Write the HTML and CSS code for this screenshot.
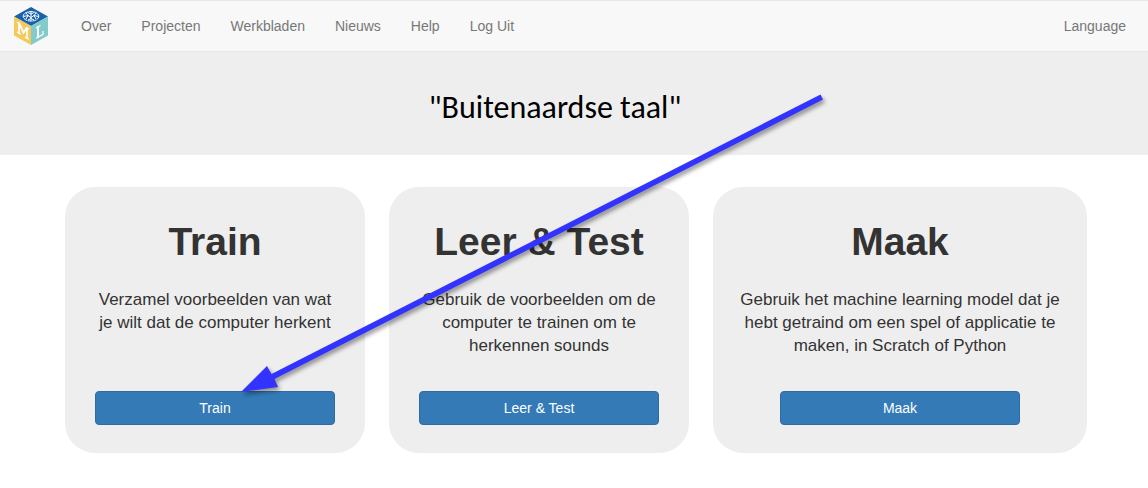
FILE: index.html
```html
<!DOCTYPE html>
<html lang="nl">
<head>
<meta charset="utf-8">
<meta name="viewport" content="width=device-width, initial-scale=1">
<title>Buitenaardse taal</title>
<link rel="stylesheet" href="styles.css">
</head>
<body>
<header class="navbar">
  <a class="brand" href="#" aria-label="Home">
    <svg class="logo" viewBox="0 0 34 38" aria-hidden="true">
      <path fill="#1862ab" d="M17 0 34 9.500 17 19 0 9.500z"/>
      <path fill="#f5c95b" d="M0 9.500 17 19V38L0 28.500z"/>
      <path fill="#82cbca" d="M34 9.500 17 19V38l17-9.500z"/>
      <g fill="none" stroke="#fff" stroke-width="1">
        <ellipse cx="17" cy="9.300" rx="7.800" ry="4.800" stroke-dasharray="4 .6"/>
        <path d="M17 4.500v9.600M12 6l2 2.500-2 3.500M22 6l-2 2.500 2 3.500M9.500 9.500l4.500-1 3 2 3-2 4.500 1M14 5.500l3 1.500 3-1.500M14 13l3-1.500 3 1.500"/>
      </g>
      <g fill="none" stroke="#fff" stroke-linecap="square">
        <path stroke-width="1.600" d="M5 16v10M13 21v10"/>
        <path stroke-width="2" d="M5.500 17l4 8.500 3-4"/>
        <path stroke-width="1.200" d="M3.500 15.500l2 1M3.500 25.200l3 1.700M11.500 30.200l3 1.700M13 20.800l1.500 1"/>
        <path stroke-width="1.900" d="M24 20v10"/>
        <path stroke-width="1.200" d="M22.500 20.700l3.500-2M22.500 31l6.500-3.700V24.500"/>
      </g>
    </svg>
  </a>
  <nav class="menu">
    <a href="#">Over</a>
    <a href="#">Projecten</a>
    <a href="#">Werkbladen</a>
    <a href="#">Nieuws</a>
    <a href="#">Help</a>
    <a href="#">Log Uit</a>
  </nav>
  <a class="language" href="#">Language</a>
</header>
<div class="hero"><h1 class="title">"Buitenaardse taal"</h1></div>
<main class="cards">
  <section class="card">
    <h2>Train</h2>
    <p>Verzamel voorbeelden van wat je wilt dat de computer herkent</p>
    <button type="button">Train</button>
  </section>
  <section class="card">
    <h2>Leer &amp; Test</h2>
    <p>Gebruik de voorbeelden om de computer te trainen om te herkennen sounds</p>
    <button type="button">Leer &amp; Test</button>
  </section>
  <section class="card">
    <h2>Maak</h2>
    <p>Gebruik het machine learning model dat je hebt getraind om een spel of applicatie te maken, in Scratch of Python</p>
    <button type="button">Maak</button>
  </section>
</main>
<svg class="arrow" viewBox="0 0 620 330" aria-hidden="true">
  <path fill="#33f" d="M10 312 36 286 40.500 294 589.500 14.500 592 19.500 43.500 299 47 307z"/>
</svg>
</body>
</html>
```

FILE: styles.css
```css
* { box-sizing: border-box; }

body {
  margin: 0;
  position: relative;
  background: #fff;
  color: #333;
  font-family: "Liberation Sans", Arial, sans-serif;
  font-size: 14px;
  line-height: 20px;
}

.navbar {
  display: flex;
  align-items: center;
  min-height: 52px;
  padding: 0 22px 0 14px;
  background: #f8f8f8;
  border-top: 1px solid #e7e7e7;
  border-bottom: 1px solid #e7e7e7;
}

.navbar a {
  color: #777;
  text-decoration: none;
}

.brand,
.logo { display: block; }

.logo {
  width: 34px;
  height: 38px;
}

.menu {
  display: flex;
  flex-wrap: wrap;
  gap: 0 30px;
  margin-left: 33px;
}

.language { margin-left: auto; }

.hero {
  padding: 36px 38px 27px 0;
  background: #eee;
  text-align: center;
}

.title {
  margin: 0;
  color: #000;
  font: 400 32px/40px Carlito, "Noto Sans", sans-serif;
}

.cards {
  display: grid;
  grid-template-columns: 300fr 300fr 374fr;
  gap: 24px;
  padding: 32px 61px 32px 65px;
}

.card {
  display: flex;
  flex-direction: column;
  align-items: center;
  padding: 33px 26px 28px;
  border-radius: 30px;
  background: #eee;
  text-align: center;
}

.card h2 {
  margin: 0 0 24px;
  font-size: 39px;
  line-height: 44px;
}

.card p {
  margin: 0 0 34px;
  font-size: 17px;
  line-height: 23px;
}

.card button {
  width: 100%;
  max-width: 240px;
  margin-top: auto;
  padding: 6px 12px;
  border: 1px solid #2e6da4;
  border-radius: 4px;
  background: #337ab7;
  color: #fff;
  font: inherit;
  cursor: pointer;
}

.arrow {
  position: absolute;
  top: 80px;
  left: 231px;
  width: 620px;
  height: 330px;
  pointer-events: none;
  filter: drop-shadow(2px 3px 2px rgba(0, 0, 0, 0.4));
}

@media (max-width: 900px) {
  .cards { grid-template-columns: 1fr; }
  .arrow { display: none; }
}
```
